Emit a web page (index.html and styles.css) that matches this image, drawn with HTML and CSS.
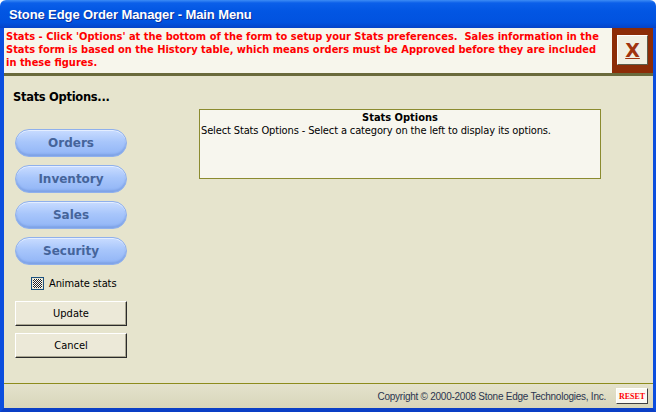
FILE: index.html
```html
<!DOCTYPE html>
<html lang="en">
<head>
  <meta charset="UTF-8" />
  <title>Stone Edge Order Manager - Main Menu</title>
  <link rel="stylesheet" href="styles.css">
</head>
<body>
  <div class="window">
    <div class="titlebar">Stone Edge Order Manager - Main Menu</div>

    <div class="frame">
      <!-- red notice strip with the close button on the right -->
      <div class="notice">
        <p class="notice-text">Stats - Click 'Options' at the bottom of the form to setup your Stats preferences.&nbsp; Sales information in the Stats form is based on the History table, which means orders must be Approved before they are included in these figures.</p>
        <div class="close-area">
          <button class="close-btn"><u>X</u></button>
        </div>
      </div>

      <div class="content">
        <div class="sidebar">
          <h2>Stats Options...</h2>
          <div class="pill-list">
            <button class="pill">Orders</button>
            <button class="pill">Inventory</button>
            <button class="pill">Sales</button>
            <button class="pill">Security</button>
          </div>
          <label class="check">
            <span class="check-box"></span>
            Animate stats
          </label>
          <button class="btn">Update</button>
          <button class="btn">Cancel</button>
        </div>

        <div class="options-box">
          <div class="options-title">Stats Options</div>
          <div class="options-text">Select Stats Options - Select a category on the left to display its options.</div>
        </div>
      </div>

      <div class="footer">
        <span class="copyright">Copyright &copy; 2000-2008 Stone Edge Technologies, Inc.</span>
        <button class="reset">RESET</button>
      </div>
    </div>
  </div>
</body>
</html>
```

FILE: styles.css
```css
body {
  margin: 0;
  font-family: 'DejaVu Sans', sans-serif;
  background: #ffffff;
}

.window {
  width: 656px;
  height: 412px;
  display: flex;
  flex-direction: column;
  overflow: hidden;
}

.titlebar {
  height: 28px;
  line-height: 30px;
  padding-left: 9px;
  color: white;
  font-family: 'Liberation Sans', sans-serif;
  font-size: 13px;
  font-weight: bold;
  letter-spacing: -0.1px;
  background: linear-gradient(#3d8cf5 0, #0b5fe9 3px, #0256e3 40%, #0152df 80%, #0443c8 100%);
  border-radius: 6px 6px 0 0;
  text-shadow: 1px 1px 0 #0a2f9a;
}

.frame {
  flex: 1;
  display: flex;
  flex-direction: column;
  border-left: 4px solid #0b4ede;
  border-right: 3px solid #0b4ede;
  border-bottom: 4px solid #0a3fc6;
  background: #e6e4cd;
}

/* red notice strip */
.notice {
  display: flex;
  height: 45px;
  background: #f7f6ec;
  border-bottom: 3px solid #6a6a3c;
}

.notice-text {
  flex: 1;
  margin: 0;
  padding: 2px 4px 0 2px;
  color: #ff0000;
  font-size: 11px;
  font-weight: bold;
  line-height: 13px;
  font-family: 'DejaVu Sans Condensed', 'DejaVu Sans', sans-serif;
}

.close-area {
  width: 41px;
  background: #8c2c07;
  display: flex;
  justify-content: center;
  padding-top: 7px;
  box-sizing: border-box;
}

.close-btn {
  width: 31px;
  height: 30px;
  padding: 0;
  background: #f1efe2;
  border: 1px solid;
  border-color: #ffffff #5c5c4a #5c5c4a #ffffff;
  color: #a1340f;
  font-family: 'DejaVu Sans', sans-serif;
  font-size: 19px;
  font-weight: bold;
}

.content {
  flex: 1;
  display: flex;
  padding: 14px 0 0 9px;
}

.sidebar {
  width: 114px;
  display: flex;
  flex-direction: column;
}

.sidebar h2 {
  margin: 0;
  font-size: 11.5px;
  font-weight: bold;
  color: #000;
  letter-spacing: -0.3px;
}

.pill-list {
  display: flex;
  flex-direction: column;
  gap: 8px;
  margin: 25px 0 0 2px;
}

.pill {
  width: 112px;
  height: 28px;
  padding: 0;
  border: 1px solid #8fb0ec;
  border-radius: 14px;
  background: linear-gradient(#c9dcff 0, #a8c6fb 45%, #90b4f6 100%);
  box-shadow: inset 0 1px 0 #e4eeff, inset 0 -2px 2px #7fa3e6;
  color: #45649a;
  font-family: 'DejaVu Sans', sans-serif;
  font-size: 12px;
  font-weight: bold;
}

.check {
  display: flex;
  align-items: center;
  gap: 5px;
  margin: 12px 0 0 18px;
  font-size: 11px;
  letter-spacing: -0.1px;
  color: #000;
  font-family: 'DejaVu Sans Condensed', sans-serif;
}

.check-box {
  width: 9px;
  height: 9px;
  border: 1px solid #1c5180;
  background-color: #fff;
  background-image: repeating-conic-gradient(#222 0 25%, #fff 0 50%);
  background-size: 2px 2px;
  background-clip: content-box;
  padding: 1px;
  box-sizing: content-box;
}

.btn {
  width: 112px;
  height: 25px;
  margin: 11px 0 0 2px;
  padding: 0;
  background: #ece9d8;
  border: 1px solid;
  border-color: #ffffff #2a2a2a #2a2a2a #ffffff;
  box-shadow: inset -1px -1px 0 #a9a691;
  color: #000;
  font-family: 'DejaVu Sans Condensed', sans-serif;
  font-size: 11px;
}

.btn + .btn {
  margin-top: 7px;
}

.options-box {
  width: 400px;
  height: 68px;
  margin: 19px 0 0 72px;
  border: 1px solid #8b8b2f;
  background: #f7f6ee;
  font-size: 11px;
  font-family: 'DejaVu Sans Condensed', sans-serif;
}

.options-title {
  text-align: center;
  font-weight: bold;
  margin-top: 1px;
}

.options-text {
  padding-left: 1px;
  letter-spacing: -0.13px;
}

.footer {
  height: 24px;
  display: flex;
  align-items: center;
  justify-content: flex-end;
  border-top: 1px solid #8d8c1d;
  background: linear-gradient(#e4e2cc, #d8d6ba);
  padding-right: 5px;
}

.copyright {
  font-size: 10px;
  letter-spacing: -0.25px;
  color: #2b3550;
  font-family: 'Liberation Sans', sans-serif;
  margin-right: 10px;
}

.reset {
  width: 32px;
  height: 16px;
  padding: 0;
  background: #fbfaf4;
  border: 1px solid;
  border-color: #ffffff #404040 #404040 #ffffff;
  color: #ff0000;
  font-size: 8px;
  font-weight: bold;
  font-family: 'Liberation Serif', serif;
}
```
